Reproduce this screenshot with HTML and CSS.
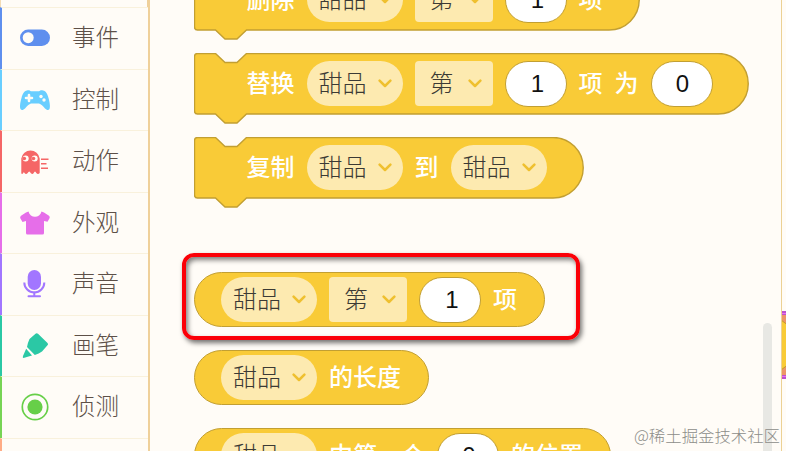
FILE: index.html
```html
<!DOCTYPE html>
<html lang="zh-CN">
<head>
<meta charset="utf-8">
<title>积木</title>
<link rel="stylesheet" href="styles.css">
</head>
<body>
<svg width="0" height="0" class="defs"><defs>
<symbol id="chev" viewBox="0 0 14 9"><path d="M1.6 1.6 7 7 12.400 1.600" fill="none" stroke="#efc02f" stroke-width="2.500" stroke-linecap="round" stroke-linejoin="round"/></symbol>
</defs></svg>
<div class="app">
<nav class="sidebar">
  <div class="stub"></div>
  <div class="cat events"><svg viewBox="0 0 32 32"><rect x="1" y="7.500" width="30" height="16.5" rx="8.2" fill="#5f8fee"/><circle cx="9.2" cy="15.700" r="5.5" fill="#fffcf6"/></svg><span>事件</span></div>
  <div class="cat control"><svg viewBox="0 0 32 32"><path d="M8 6.5C9.5 5.8 11 6.5 12 7.3H20C21 6.5 22.500 5.800 24 6.500C27 7 28.500 10 29.500 14C30.700 18 31.500 23 30.500 25C29.500 26.700 27.500 26 26 24.500C24 22 22 20 20 19.500H12C10 20 8 22 6 24.500C4.500 26 2.500 26.700 1.500 25C.5 23 1.300 18 2.500 14C3.500 10 5 7 8 6.500Z" fill="#69ceff"/><path d="M10 11V17M7 14H13" stroke="#fffcf6" stroke-width="2.600" stroke-linecap="round"/><circle cx="22" cy="12.500" r="1.700" fill="#fffcf6"/><circle cx="25" cy="16" r="1.700" fill="#fffcf6"/></svg><span>控制</span></div>
  <div class="cat motion"><svg viewBox="0 0 32 32"><path d="M2.300 28V13.500A9.300 9.300 0 0 1 20.700 13.500V28Q19 30 17.300 28Q16 25 14.700 28Q13.500 30 11.700 28Q10.200 25 8.700 28Q7 30 5.500 28Q4.800 26.500 4 28.500Q2.500 29.500 2.300 28Z" fill="#f56666"/><circle cx="6.700" cy="13.500" r="3" fill="#fffcf6"/><circle cx="15.700" cy="13.500" r="3" fill="#fffcf6"/><circle cx="5.300" cy="13.500" r="1.800" fill="#f56666"/><circle cx="14.500" cy="13.500" r="1.800" fill="#f56666"/><path d="M22 14.200H29.500M22 18.700H27.500M22 23.300H29" stroke="#f56666" stroke-width="1.500"/></svg><span>动作</span></div>
  <div class="cat looks"><svg viewBox="0 0 32 32"><path d="M9.500 4.500C11 11.500 21 11.500 22.500 4.500L25 5.500 30 8.800Q31.300 9.800 30.500 11.300L28.500 14.700 25 14V26Q25 27.500 23.500 27.500H8.500Q7 27.500 7 26V14L3.500 15 1.300 11.300Q.7 9.800 2 8.800L7 5.500Z" fill="#e66ee9"/></svg><span>外观</span></div>
  <div class="cat sound"><svg viewBox="0 0 32 32"><rect x="8.700" y="2" width="13.300" height="20" rx="6.650" fill="#a276ff"/><path d="M5.300 14.500A10 10 0 0 0 25.300 14.500" fill="none" stroke="#a276ff" stroke-width="2"/><path d="M15.300 24.500V27.500M9.500 28.200H21" stroke="#a276ff" stroke-width="2" stroke-linecap="round"/></svg><span>声音</span></div>
  <div class="cat pen"><svg viewBox="0 0 32 32"><path d="M16.500 3.700Q17.700 2.700 19 3.800L28.500 13Q29.700 14.200 28.500 15.300L23 21.500Q20 23.500 15.800 25L8 17Q9 12 10.500 9Z" fill="#2bc8a5"/><path d="M7.200 18.800 13 25.500 4.500 28Q3.300 28 4 26Z" fill="#2bc8a5"/></svg><span>画笔</span></div>
  <div class="cat sense"><svg viewBox="0 0 32 32"><circle cx="16" cy="16" r="12.700" fill="none" stroke="#67cf48" stroke-width="1.700"/><circle cx="16" cy="16" r="7.600" fill="#67cf48"/></svg><span>侦测</span></div>
  <div class="cat next"></div>
</nav>
<main class="palette">
  <div class="block stack">
    <svg class="shape" width="447" height="72"><path d="M3.500.5H21.500L31 9.500H43L52.500.5H415A30.250 30.250 0 0 1 415 61H52.500L43 70H31L21.500 61H3.500Q.5 61 .5 58V3.500Q.5.500 3.500.500Z"/></svg>
    <span>删除</span><span class="pill">甜品<svg><use href="#chev"/></svg></span><span class="pill square">第<svg><use href="#chev"/></svg></span><span class="num one">1</span><span>项</span>
  </div>
  <div class="block stack">
    <svg class="shape" width="557" height="72"><path d="M3.500.5H21.500L31 9.500H43L52.500.5H524A30.250 30.250 0 0 1 524 61H52.500L43 70H31L21.500 61H3.500Q.5 61 .5 58V3.500Q.5.500 3.500.500Z"/></svg>
    <span>替换</span><span class="pill">甜品<svg><use href="#chev"/></svg></span><span class="pill square">第<svg><use href="#chev"/></svg></span><span class="num one">1</span><span>项</span><span>为</span><span class="num">0</span>
  </div>
  <div class="block stack">
    <svg class="shape" width="392" height="72"><path d="M3.500.5H21.500L31 9.500H43L52.500.5H359A30.250 30.250 0 0 1 359 61H52.500L43 70H31L21.500 61H3.500Q.5 61 .5 58V3.500Q.5.500 3.500.500Z"/></svg>
    <span>复制</span><span class="pill">甜品<svg><use href="#chev"/></svg></span><span>到</span><span class="pill">甜品<svg><use href="#chev"/></svg></span>
  </div>
  <div class="block reporter first">
    <span class="pill">甜品<svg><use href="#chev"/></svg></span><span class="pill square">第<svg><use href="#chev"/></svg></span><span class="num one">1</span><span>项</span>
    <div class="highlight"></div>
  </div>
  <div class="block reporter">
    <span class="pill">甜品<svg><use href="#chev"/></svg></span><span>的长度</span>
  </div>
  <div class="block reporter">
    <span class="pill">甜品<svg><use href="#chev"/></svg></span><span>中第一个</span><span class="num">0</span><span>的位置</span>
  </div>
  <div class="scrollbar"></div>
</main>
<aside class="workspace"><svg width="4" height="68"><path d="M0 0H4V68H0Z" fill="#bd50cf"/><path d="M0 2H4V3H0ZM0 65H4V66H0Z" fill="#ea70ee"/><path d="M0 4H4V64H0Z" fill="#ed9568"/><path d="M-1 9 5 13.500V54.500L-1 59Z" fill="#f9cb37" stroke="#c39c2d"/></svg></aside>
<div class="watermark">@稀土掘金技术社区</div>
</div>
</body>
</html>
```
FILE: styles.css
```css
* { box-sizing: border-box; }
body {
  margin: 0;
  background: #fffcf7;
  font-family: "Liberation Sans", "Noto Sans CJK SC", sans-serif;
}
.defs { position: absolute; }
.app {
  position: relative;
  display: flex;
  width: 786px;
  height: 451px;
  overflow: hidden;
}
.sidebar {
  flex: none;
  width: 150px;
  height: 451px;
  overflow: hidden;
  border-right: 2px solid #efd09a;
}
.stub {
  height: 7px;
  border-left: 1px solid #f3dcb5;
  border-right: 1px solid #efd09a;
}
.cat {
  display: flex;
  align-items: center;
  height: 61.5px;
  padding-left: 17px;
  border-top: 1px solid #f9f1dc;
  border-left: 2px solid;
  color: #5d5048;
  font-family: "Noto Sans CJK SC", sans-serif;
  font-size: 23.5px;
  font-weight: 200;
}
.cat svg { flex: none; width: 32px; height: 32px; margin-right: 21px; }
.cat span { line-height: 30px; margin-top: -4px; }
.events { border-left-color: #5f8fee; }
.control { border-left-color: #69ceff; }
.motion { border-left-color: #f56666; }
.looks { border-left-color: #e66ee9; }
.sound { border-left-color: #a276ff; }
.pen { border-left-color: #2bc8a5; }
.sense { border-left-color: #77d455; }
.next { border-left-color: #ffac86; }

.palette {
  position: relative;
  flex: none;
  display: flex;
  flex-direction: column;
  align-items: flex-start;
  gap: 23px;
  width: 631px;
  height: 451px;
  margin-top: -31px;
  padding-left: 43.5px;
}
.block {
  position: relative;
  flex: none;
  display: flex;
  align-items: center;
  gap: 12px;
  color: #fff;
  font-size: 24px;
  font-weight: 500;
  line-height: 30px;
  white-space: nowrap;
}
.block > span { position: relative; }
.stack { height: 61px; padding: 0 36px 0 53px; }
.shape { position: absolute; left: 0; top: 0; }
.shape path { fill: #f9cb37; stroke: #c29f32; stroke-width: 1.4; }
.reporter {
  height: 55px;
  padding: 0 26.5px;
  border: 1.5px solid #c29f32;
  border-radius: 28px;
  background: #f9cb37;
}
.first { margin-top: 51px; }
.pill {
  display: flex;
  align-items: center;
  justify-content: space-between;
  width: 96px;
  height: 45px;
  padding: 0 11px 0 12px;
  border-radius: 22.5px;
  background: #fdeab0;
  color: #3b3a35;
  font-weight: 300;
}
.pill svg { width: 14px; height: 9px; }
.square { width: 78px; padding-left: 15px; border-radius: 4px; }
.num {
  width: 62px;
  height: 46px;
  border: 1.5px solid #c29f32;
  border-radius: 23px;
  background: #fff;
  color: #111;
  font-weight: 400;
  line-height: 43px;
  text-align: center;
  padding-left: 2px;
}
.one { padding-left: 4px; }
.highlight {
  position: absolute;
  left: -12.5px;
  top: -20px;
  width: 398px;
  height: 87px;
  border: 4px solid #fb0007;
  border-radius: 12px;
  box-shadow: 2px 3px 5px rgba(0, 0, 0, .55), inset 2px 3px 5px rgba(0, 0, 0, .5);
}
.scrollbar {
  position: absolute;
  left: 613px;
  top: 354px;
  width: 9px;
  height: 140px;
  border-radius: 5px;
  background: #e8e8e4;
}
.workspace {
  width: 5px;
  height: 451px;
  padding-top: 311px;
  border-left: 1px solid #ecd194;
}
.workspace svg { display: block; }
.watermark {
  position: absolute;
  right: 6px;
  bottom: 4px;
  color: #8d8d89;
  font-family: "Noto Sans CJK SC", sans-serif;
  font-size: 16.4px;
  font-weight: 300;
  line-height: 24px;
  white-space: nowrap;
}
```
